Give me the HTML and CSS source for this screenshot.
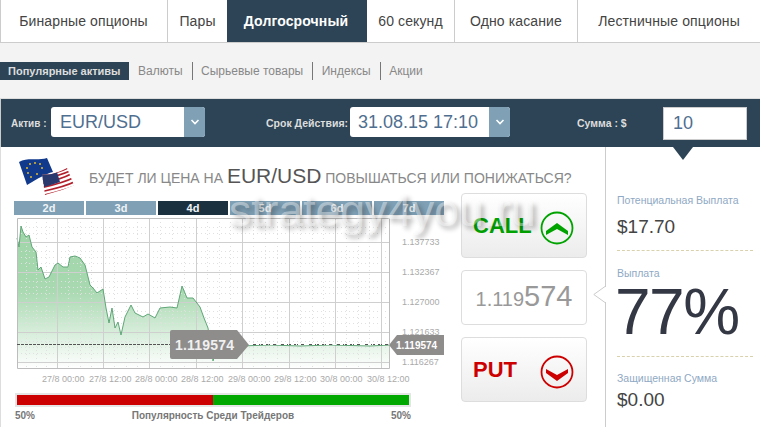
FILE: index.html
```html
<!DOCTYPE html>
<html lang="ru">
<head>
  <meta charset="UTF-8" />
  <title>Долгосрочный</title>
  <link rel="stylesheet" href="styles.css">
</head>
<body>

  <!-- TOP TABS -->
  <div class="tabs">
    <div class="tab tab-binary">Бинарные опционы</div>
    <div class="tab tab-pairs">Пары</div>
    <div class="tab tab-long">Долгосрочный</div>
    <div class="tab tab-sixty">60 секунд</div>
    <div class="tab tab-touch">Одно касание</div>
    <div class="tab tab-ladder">Лестничные опционы</div>
  </div>

  <!-- ASSET FILTER -->
  <div class="assets">
    <span class="asset asset-active">Популярные активы</span>
    <span class="asset">Валюты</span>
    <span class="asset">Сырьевые товары</span>
    <span class="asset">Индексы</span>
    <span class="asset asset-last">Акции</span>
  </div>

  <!-- ORDER BAR -->
  <div class="order-bar">
    <span class="order-label label-asset">Актив :</span>
    <div class="select select-asset">
      <span class="select-value">EUR/USD</span>
      <span class="select-btn">
        <svg width="10" height="6" viewBox="0 0 10 6"><path d="M1.5 1 L5 4.5 L8.5 1" fill="none" stroke="#fff" stroke-width="1.6"/></svg>
      </span>
    </div>
    <span class="order-label label-expiry">Срок Действия:</span>
    <div class="select select-expiry">
      <span class="select-value">31.08.15 17:10</span>
      <span class="select-btn">
        <svg width="10" height="6" viewBox="0 0 10 6"><path d="M1.5 1 L5 4.5 L8.5 1" fill="none" stroke="#fff" stroke-width="1.6"/></svg>
      </span>
    </div>
    <span class="order-label label-amount">Сумма : $</span>
    <div class="amount">10</div>
  </div>

  <div class="main">
    <div class="trade">

      <div class="question">
        <svg class="flag" width="60" height="40" viewBox="0 0 60 40">
          <defs>
            <clipPath id="usClip"><path d="M25 18 C33 20 42 16 50 12 L57 29 C49 33 38 36 28 39 Z"/></clipPath>
          </defs>
          <path d="M2 6 C10 1 20 5 30 2 L36 16 C28 18 22 22 10 29 Z" fill="#123a8c"/>
          <g fill="#e0b92e">
            <circle cx="13" cy="8" r="1"/><circle cx="18" cy="7" r="1"/><circle cx="23" cy="8" r="1"/>
            <circle cx="10" cy="12" r="1"/><circle cx="25" cy="12" r="1"/><circle cx="11" cy="17" r="1"/>
            <circle cx="14" cy="21" r="1"/><circle cx="20" cy="18" r="1"/>
          </g>
          <g clip-path="url(#usClip)">
            <rect x="20" y="8" width="40" height="34" fill="#fff"/>
            <g fill="none" stroke="#b3202c" stroke-width="1.7">
              <path d="M24 40 C36 37 48 34 58 30"/>
              <path d="M23 36 C36 33 47 31 57 26"/>
              <path d="M23 32 C36 29 46 27 56 22"/>
              <path d="M23 28 C36 25 45 23 54 18"/>
              <path d="M23 24 C36 21 44 19 53 15"/>
              <path d="M23 20 C36 18 43 16 51 12"/>
            </g>
            <path d="M24 17 C30 19 36 18 40 16 L43 26 C38 28 33 29 27 31 Z" fill="#2a3a6e"/>
          </g>
        </svg>
        <p class="question-text">БУДЕТ ЛИ ЦЕНА НА <span class="question-pair">EUR/USD</span> ПОВЫШАТЬСЯ ИЛИ ПОНИЖАТЬСЯ?</p>
      </div>

      <div class="trade-row">
        <div class="chart-col">
          <div class="ranges">
            <span class="range">2d</span>
            <span class="range">3d</span>
            <span class="range range-active">4d</span>
            <span class="range">5d</span>
            <span class="range">6d</span>
            <span class="range">7d</span>
          </div>

          <svg class="chart" width="461" height="170" viewBox="0 216 461 170">
            <defs>
              <linearGradient id="areaFill" x1="0" y1="0" x2="0" y2="1">
                <stop offset="0" stop-color="#9fd4a8"/>
                <stop offset="0.45" stop-color="#a8d9b0"/>
                <stop offset="1" stop-color="#ffffff"/>
              </linearGradient>
            </defs>
            <!-- area -->
            <path fill="url(#areaFill)" d="M17 238 L19 247 L21 226 L23 232 L26 237 L29 235 L32 247 L36 252 L38 270 L41 267 L45 279 L49 277 L55 265 L58 263 L63 267 L68 267 L70 257 L75 256 L80 258 L85 265 L90 285 L93 288 L97 293 L103 289 L106 308 L109 323 L112 308 L115 328 L118 322 L121 335 L125 317 L131 305 L135 313 L143 317 L148 314 L155 318 L160 308 L170 307 L177 308 L182 286 L187 298 L193 298 L200 307 L204 318 L208 328 L213 361 L216 352 L240 346 L270 345 L300 346 L330 345 L370 346 L390 345 L390 369 L17 369 Z"/>
            <!-- minor grid -->
            <g stroke="#e0e0e0" stroke-width="1" stroke-dasharray="1 3">
              <path d="M17 227.5H390M17 233.5H390M17 251.5H390M17 257.5H390M17 263.5H390M17 281.5H390M17 287.5H390M17 293.5H390M17 311.5H390M17 317.5H390M17 323.5H390M17 341.5H390M17 347.5H390M17 353.5H390"/>
              <path d="M26.5 218V369M36.5 218V369M46.5 218V369M68.5 218V369M80.5 218V369M91.5 218V369M114.5 218V369M126.5 218V369M137.5 218V369M160.5 218V369M172.5 218V369M184.5 218V369M207.5 218V369M219.5 218V369M230.5 218V369M253.5 218V369M265.5 218V369M277.5 218V369M300.5 218V369M312.5 218V369M323.5 218V369M346.5 218V369M358.5 218V369M369.5 218V369"/>
            </g>
            <!-- major grid -->
            <g stroke="#cfcfcf" stroke-width="1">
              <path d="M17 242.5H390M17 272.5H390M17 302.5H390M17 332.5H390M17 362.5H390"/>
              <path d="M57.5 218V369M103.5 218V369M149.5 218V369M196.5 218V369M242.5 218V369M289.5 218V369M335.5 218V369M381.5 218V369"/>
            </g>
            <!-- price line -->
            <path fill="none" stroke="#5fa677" stroke-width="1" d="M17 238 L19 247 L21 226 L23 232 L26 237 L29 235 L32 247 L36 252 L38 270 L41 267 L45 279 L49 277 L55 265 L58 263 L63 267 L68 267 L70 257 L75 256 L80 258 L85 265 L90 285 L93 288 L97 293 L103 289 L106 308 L109 323 L112 308 L115 328 L118 322 L121 335 L125 317 L131 305 L135 313 L143 317 L148 314 L155 318 L160 308 L170 307 L177 308 L182 286 L187 298 L193 298 L200 307 L204 318 L208 328 L213 361 L216 352 L240 346 L270 345 L300 346 L330 345 L370 346 L390 345"/>
            <path d="M17.5 218.5H389.5V368.5H17.5Z" fill="none" stroke="#bdbdbd" stroke-width="1"/>
            <path d="M17 344.5H390" stroke="#555" stroke-width="1" stroke-dasharray="3 1"/>
            <path d="M249 344.5H390" stroke="#fff" stroke-width="1" stroke-dasharray="3 4"/>
            <!-- y axis -->
            <g class="axis-y">
              <text x="402" y="245">1.137733</text>
              <text x="402" y="275">1.132367</text>
              <text x="402" y="305">1.127000</text>
              <text x="402" y="335">1.121633</text>
              <text x="402" y="365">1.116267</text>
            </g>
            <!-- x axis -->
            <g class="axis-x">
              <text x="42" y="382">27/8 00:00</text>
              <text x="89" y="382">27/8 12:00</text>
              <text x="135" y="382">28/8 00:00</text>
              <text x="181" y="382">28/8 12:00</text>
              <text x="228" y="382">29/8 00:00</text>
              <text x="274" y="382">29/8 12:00</text>
              <text x="320" y="382">30/8 00:00</text>
              <text x="367" y="382">30/8 12:00</text>
            </g>
            <!-- price tags -->
            <path d="M172 330 H237 L249 345 L237 359 H172 Q170 359 170 357 V332 Q170 330 172 330 Z" fill="#8f8c8c"/>
            <text class="tag-big" x="175" y="350">1.119574</text>
            <path d="M389 345 L397 335 H444 V355 H397 Z" fill="#8f8c8c"/>
            <text class="tag-small" x="396" y="349">1.119574</text>
          </svg>

          <div class="popularity">
            <div class="pop-bar">
              <span class="pop-red"></span>
              <span class="pop-green"></span>
            </div>
            <div class="pop-labels">
              <span>50%</span>
              <span>Популярность Среди Трейдеров</span>
              <span>50%</span>
            </div>
          </div>
        </div>

        <div class="actions">
          <div class="trade-btn call-btn">
            <span>CALL</span>
            <svg width="34" height="34" viewBox="0 0 34 34">
              <circle cx="17" cy="17" r="15.5" fill="none" stroke="#00a300" stroke-width="1.8"/>
              <path d="M6 20 L17 12 L28 20 L28 24 L17 18 L6 24 Z" fill="#00a300"/>
            </svg>
          </div>
          <div class="live-price"><span class="price-small">1.119</span><span class="price-big">574</span></div>
          <div class="trade-btn put-btn">
            <span>PUT</span>
            <svg width="34" height="34" viewBox="0 0 34 34">
              <circle cx="17" cy="17" r="15.5" fill="none" stroke="#cc0000" stroke-width="1.8"/>
              <path d="M6 14 L17 20 L28 14 L28 18 L17 26 L6 18 Z" fill="#cc0000"/>
            </svg>
          </div>
        </div>
      </div>
    </div>

    <!-- PAYOUT SIDEBAR -->
    <div class="payout">
      <span class="payout-caret"></span>
      <svg class="payout-notch" width="13" height="17" viewBox="0 0 13 17">
        <path d="M13 0.5 H12 L0.8 8.5 L12 16.5 H13" fill="#fff" stroke="#ccc" stroke-width="1"/>
      </svg>
      <div class="payout-block block-potential">
        <div class="payout-label">Потенциальная Выплата</div>
        <div class="payout-value">$17.70</div>
      </div>
      <div class="payout-block block-rate">
        <div class="payout-label">Выплата</div>
        <div class="payout-rate">77%</div>
      </div>
      <div class="payout-block block-protected">
        <div class="payout-label">Защищенная Сумма</div>
        <div class="payout-value">$0.00</div>
      </div>
    </div>
  </div>

  <div class="watermark">strategy4you.ru</div>

</body>
</html>
```

FILE: styles.css
```css
html, body {
  height: 427px;
  overflow: hidden;
}
body {
  margin: 0;
  background-color: #fff;
  font-family: "Liberation Sans", Arial, sans-serif;
  position: relative;
}

/* tabs */
.tabs {
  display: flex;
  height: 42px;
  border-bottom: 1px solid #ccc;
  border-left: 1px solid #ccc;
  font-size: 14px;
  letter-spacing: .12px;
  color: #444;
}
.tab {
  display: flex;
  align-items: center;
  justify-content: center;
  border-right: 1px solid #ccc;
  box-sizing: border-box;
}
.tab-binary { width: 167px; padding-right: 1px; }
.tab-pairs { width: 59px; border-right: none; }
.tab-long {
  width: 140px;
  padding-right: 2px;
  background-color: #2c4456;
  color: #fff;
  font-weight: bold;
  border-right: none;
}
.tab-sixty { width: 88px; }
.tab-touch { width: 123px; }
.tab-ladder { flex: 1; border-right: none; }

/* asset filter */
.assets {
  display: flex;
  align-items: center;
  height: 56px;
  box-sizing: border-box;
  padding-top: 1px;
  background-color: #f3f3f3;
  border-bottom: 1px solid #ddd;
  font-size: 12px;
  color: #888;
}
.asset {
  height: 18px;
  line-height: 18px;
  padding: 0 9px 0 8.5px;
  border-right: 1px solid #777;
  white-space: nowrap;
}
.asset-active {
  width: 129px;
  box-sizing: border-box;
  margin-right: 9px;
  padding: 0 0 0 8px;
  border-right: none;
  background-color: #2c4456;
  color: #ddd;
  font-size: 11px;
  font-weight: bold;
}
.asset:nth-child(2) { padding-left: 0; }
.asset-last { border-right: none; }

/* order bar */
.order-bar {
  display: flex;
  align-items: center;
  height: 48px;
  background-color: #2c4456;
  border-left: 1px solid #ccc;
  font-size: 10px;
  font-weight: bold;
  color: #ddd;
}
.order-label { white-space: nowrap; }
.label-asset { margin-left: 10px; width: 40px; }
.label-expiry { margin-left: 61px; width: 84px; font-size: 10.5px; }
.label-amount { margin-left: 67px; width: 86px; font-size: 10.5px; }
.select {
  display: flex;
  height: 30px;
  margin-bottom: 2px;
  background-color: #fff;
  border-radius: 3px;
  overflow: hidden;
  font-weight: normal;
  font-size: 18px;
  color: #4f6f90;
}
.select-asset { width: 154px; }
.select-expiry { width: 160px; }
.select-value {
  flex: 1;
  line-height: 30px;
  padding-left: 9px;
}
.select-expiry .select-value { padding-left: 8px; }
.select-btn {
  display: flex;
  align-items: center;
  justify-content: center;
  width: 21px;
  background-color: #7fa0b5;
}
.amount {
  width: 84px;
  height: 33px;
  box-sizing: border-box;
  line-height: 31px;
  padding-left: 9px;
  background-color: #fff;
  border: 1px solid #ccc;
  font-weight: normal;
  font-size: 18px;
  color: #4f6f90;
}

/* main area */
.main {
  display: flex;
  height: 280px;
  border-left: 1px solid #ddd;
}
.trade {
  width: 604px;
  border-right: 1px solid #ccc;
}
.question {
  display: flex;
  height: 46px;
}
.flag {
  margin: 9px 0 0 16px;
}
.question-text {
  margin: 17px 0 0 12px;
  font-size: 14px;
  color: #888;
  white-space: nowrap;
}
.question-pair {
  font-size: 21px;
  color: #555;
}
.trade-row {
  display: flex;
}
.chart-col {
  width: 460px;
  padding-top: 8px;
}
.ranges {
  display: flex;
  gap: 2px;
  margin-left: 13px;
  margin-bottom: 1px;
}
.range {
  width: 70px;
  height: 14px;
  line-height: 14px;
  text-align: center;
  background-color: #7fa0b5;
  color: #eef3f6;
  font-size: 11px;
  font-weight: bold;
}
.range-active {
  background-color: #1c3140;
}
.chart {
  display: block;
  margin-left: -1px;
}
.axis-y text {
  font-size: 9px;
  fill: #aaa;
}
.axis-x text {
  font-size: 9px;
  fill: #aaa;
}
.tag-big {
  font-size: 14px;
  font-weight: bold;
  fill: #f0f0f0;
  letter-spacing: .2px;
}
.tag-small {
  font-size: 10px;
  font-weight: bold;
  fill: #fff;
}

/* popularity */
.popularity {
  width: 396px;
  margin: 7px 0 0 14px;
}
.pop-bar {
  display: flex;
  height: 10px;
  border: 2px solid #e5e5e5;
}
.pop-red {
  width: 50%;
  background-color: #cc0000;
}
.pop-green {
  width: 50%;
  background-color: #00a800;
}
.pop-labels {
  display: flex;
  justify-content: space-between;
  margin-top: 3px;
  font-size: 10px;
  font-weight: bold;
  color: #777;
}

/* call / put */
.actions {
  width: 126px;
}
.trade-btn {
  display: flex;
  align-items: center;
  justify-content: space-between;
  height: 65px;
  box-sizing: border-box;
  padding: 0 12px 0 11px;
  border: 1px solid #ddd;
  border-radius: 4px;
  background: linear-gradient(#fff, #ececec);
  font-size: 22px;
  font-weight: bold;
}
.call-btn { color: #00a300; }
.put-btn { color: #cc0000; }
.trade-btn svg { margin-top: 5px; }
.live-price {
  height: 55px;
  box-sizing: border-box;
  margin: 12px 0;
  padding-top: 8px;
  text-align: center;
  line-height: 34px;
  border: 1px solid #ddd;
  border-radius: 4px;
  color: #999;
}
.price-small { font-size: 20px; }
.price-big { font-size: 29px; }

/* sidebar */
.payout {
  position: relative;
  flex: 1;
  padding: 0 7px 0 11px;
}
.payout-caret {
  position: absolute;
  top: 0;
  left: 67px;
  border-top: 13px solid #2c4456;
  border-left: 10px solid transparent;
  border-right: 10px solid transparent;
}
.payout-notch {
  position: absolute;
  top: 139px;
  left: -13px;
}
.payout-block {
  border-bottom: 1px dashed #d9d0ac;
}
.block-potential {
  height: 56px;
  padding-top: 47px;
}
.block-rate {
  height: 89px;
  padding-top: 16px;
}
.block-protected {
  padding-top: 15px;
  border-bottom: none;
}
.payout-label {
  font-size: 10.5px;
  color: #8fa9c4;
}
.payout-value {
  margin-top: 10px;
  font-size: 19px;
  color: #444;
}
.block-protected .payout-value {
  margin-top: 5px;
}
.payout-rate {
  margin: -6px 0 0 -2px;
  font-size: 64px;
  line-height: 78px;
  letter-spacing: -1.5px;
  color: #333844;
}

/* overlay */
.watermark {
  position: absolute;
  top: 186px;
  left: 229px;
  font-size: 44.5px;
  color: rgba(255, 255, 255, .4);
  text-shadow: 3px 3px 5px rgba(0, 0, 0, .3);
  white-space: nowrap;
}
```
